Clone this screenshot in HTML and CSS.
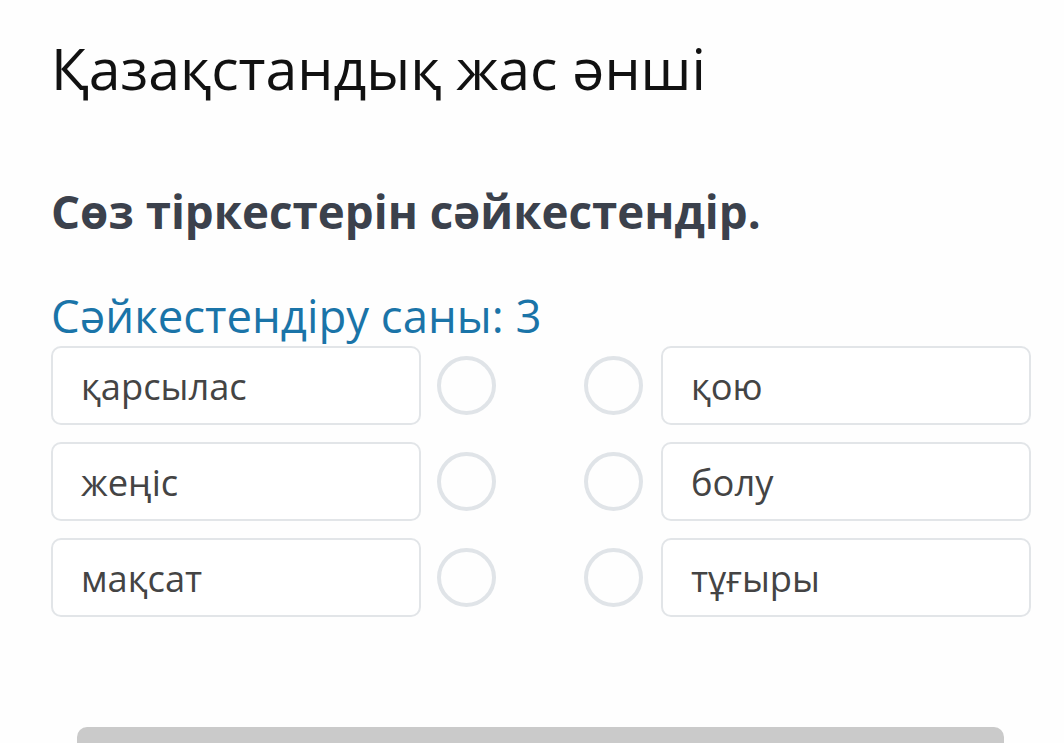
FILE: index.html
```html
<!DOCTYPE html>
<html lang="kk">
<head>
<meta charset="utf-8">
<link rel="stylesheet" href="styles.css">
</head>
<body>
<div class="page">
  <h1 class="title">Қазақстандық жас әнші</h1>
  <h2 class="question">Сөз тіркестерін сәйкестендір.</h2>
  <div class="count">Сәйкестендіру саны: 3</div>
  <div class="rows">
    <div class="row">
      <div class="box">қарсылас</div>
      <span class="dot"></span>
      <span class="dot dot-right"></span>
      <div class="box">қою</div>
    </div>
    <div class="row">
      <div class="box">жеңіс</div>
      <span class="dot"></span>
      <span class="dot dot-right"></span>
      <div class="box">болу</div>
    </div>
    <div class="row">
      <div class="box">мақсат</div>
      <span class="dot"></span>
      <span class="dot dot-right"></span>
      <div class="box">тұғыры</div>
    </div>
  </div>
  <div class="bottom-bar"></div>
</div>
</body>
</html>
```
FILE: styles.css
```css
html, body {
  margin: 0;
  padding: 0;
  background: #fefefe;
  overflow: hidden;
}
.page {
  width: 1064px;
  height: 743px;
  padding-left: 51px;
  box-sizing: border-box;
  font-family: "Open Sans", "Noto Sans", sans-serif;
  position: relative;
}
.title {
  margin: 0;
  padding-top: 30px;
  font-weight: 400;
  font-size: 57.2px;
  line-height: 76px;
  color: #111;
}
.question {
  margin: 0;
  padding-top: 75px;
  font-weight: 700;
  font-size: 45.7px;
  line-height: 60px;
  color: #3b414c;
}
.count {
  margin-top: 47px;
  font-size: 45.5px;
  line-height: 54px;
  color: #1a74a8;
}
.rows {
  margin-top: 4px;
  display: flex;
  flex-direction: column;
  gap: 17px;
}
.row {
  display: flex;
  align-items: center;
}
.box {
  width: 370px;
  height: 79px;
  box-sizing: border-box;
  border: 2px solid #e2e5e8;
  border-radius: 10px;
  padding-left: 28px;
  display: flex;
  align-items: center;
  font-size: 36.3px;
  color: #444;
  background: #fff;
}
.dot {
  width: 59px;
  height: 59px;
  box-sizing: border-box;
  border: 4px solid #e0e4e8;
  border-radius: 50%;
  margin-left: 16px;
}
.dot-right {
  margin-left: 88px;
  margin-right: 18px;
}
.bottom-bar {
  position: absolute;
  left: 77px;
  top: 727px;
  width: 927px;
  height: 30px;
  background: #cacaca;
  border-radius: 10px;
}
```
